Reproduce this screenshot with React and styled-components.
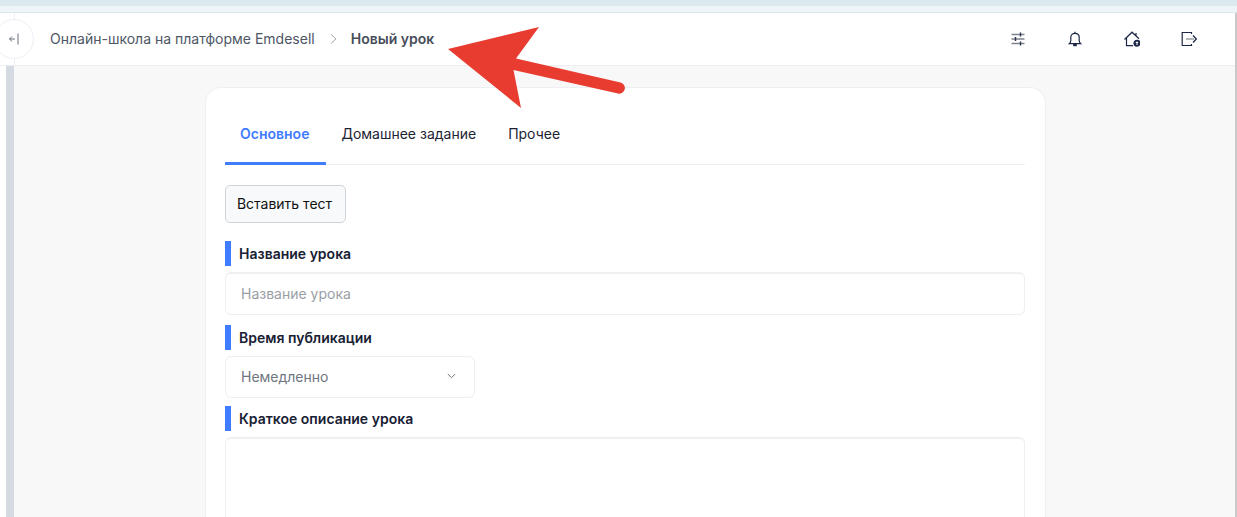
import React from "react";
import styled, { createGlobalStyle } from "styled-components";

const Global = createGlobalStyle`
  html, body { margin: 0; padding: 0; height: 517px; overflow: hidden; background: #fff; }
  * { box-sizing: border-box; }
  body { font-family: Inter, "Noto Sans", sans-serif; font-size: 14px; }
`;

const Page = styled.div`
  position: relative;
  width: 1237px;
  height: 517px;
  overflow: hidden;
  background: #ecf4f7;
  display: flex;
  flex-direction: column;
`;
const TopStrip = styled.div`
  height: 6px;
  background: #dce9ef;
  flex: none;
`;
const Gap = styled.div`
  height: 7px;
  flex: none;
  background: #edf5f8;
  border-bottom: 1px solid #dfe8ec;
`;
const Shell = styled.div`
  flex: 1;
  min-height: 0;
  display: flex;
  flex-direction: column;
  background: #fff;
  border-right: 2px solid #c9c9c9;
`;
const Header = styled.header`
  position: relative;
  flex: none;
  height: 53px;
  display: flex;
  align-items: center;
  padding: 0 38px 0 50px;
  background: #fff;
  border-bottom: 1px solid #eeeef2;
  &::before {
    content: "";
    position: absolute;
    left: 14px;
    top: 0;
    bottom: 0;
    width: 1px;
    background: #eeeef4;
  }
`;
const Collapse = styled.button`
  position: absolute;
  left: -6px;
  top: 6px;
  width: 40px;
  height: 40px;
  padding: 0;
  border-radius: 50%;
  background: #fff;
  border: 1px solid #eeeef6;
  display: flex;
  align-items: center;
  justify-content: center;
`;
const Crumb = styled.span`
  font-size: 14px;
  color: #4e5665;
  white-space: nowrap;
  margin-bottom: 2px;
`;
const CrumbSep = styled.svg`
  width: 7px;
  height: 10px;
  margin: 0 14px 0 15px;
  flex: none;
`;
const CrumbCurrent = styled.span`
  font-size: 14px;
  font-weight: 600;
  color: #474d59;
  white-space: nowrap;
  margin-bottom: 2px;
`;
const Tools = styled.div`
  margin-left: auto;
  display: flex;
  align-items: center;
  gap: 41px;
`;
const Tool = styled.svg`
  width: 16px;
  height: 16px;
  flex: none;
  display: block;
`;
const Body = styled.div`
  flex: 1;
  min-height: 0;
  display: flex;
  overflow: hidden;
  background: #fff;
`;
const Rail = styled.div`
  width: 8px;
  margin-left: 6px;
  flex: none;
  background: #d5d9e2;
`;
const Main = styled.main`
  flex: 1;
  min-width: 0;
  background: #f8f8f8;
  padding: 21px 189px 0 191px;
`;
const Card = styled.section`
  background: #fff;
  border: 1px solid #eeeef4;
  border-bottom: 0;
  border-radius: 16px 16px 0 0;
  padding: 0 20px 0 19px;
  min-height: 600px;
  width: 841px;
`;
const Tabs = styled.div`
  display: flex;
  height: 77px;
  border-bottom: 1px solid #eeeef4;
  margin-bottom: 20px;
`;
const Tab = styled.div`
  height: 77px;
  padding: 16px 17px 0 15px;
  display: flex;
  align-items: center;
  white-space: nowrap;
  font-size: 14px;
  font-weight: ${p => (p.$active ? 600 : 400)};
  color: ${p => (p.$active ? "#3f7cff" : "#1b2333")};
  border-bottom: 3px solid ${p => (p.$active ? "#3f7cff" : "transparent")};
`;
const InsertButton = styled.button`
  display: block;
  width: 121px;
  height: 38px;
  padding: 0 2px 2px 0;
  background: #f8f9fa;
  border: 1px solid #ced4da;
  border-radius: 5px;
  font: 400 14px Inter, sans-serif;
  color: #111;
  margin-bottom: 18px;
`;
const Label = styled.div`
  height: 25px;
  display: flex;
  align-items: center;
  border-left: 6px solid #3f7cff;
  padding-left: 8px;
  font-size: 14px;
  font-weight: 600;
  color: #172033;
  margin-bottom: 6px;
`;
const Field = styled.div`
  width: 800px;
  height: 43px;
  display: flex;
  align-items: center;
  padding: 0 17px 2px 15px;
  background: #fff;
  border: 1px solid #eeeef4;
  border-top: 2px solid #f0f0f2;
  border-radius: 6px;
  font-size: 14px;
  color: #9a9ea6;
  margin-bottom: 10px;
`;
const AreaField = styled(Field)`
  height: 140px;
`;
const SelectField = styled.div`
  width: 250px;
  height: 42px;
  display: flex;
  align-items: center;
  justify-content: space-between;
  padding: 0 17px 2px 15px;
  background: #fff;
  border: 1px solid #eeeef4;
  border-radius: 6px;
  font-size: 14px;
  color: #6f7681;
  margin-bottom: 8px;
`;
const Chevron = styled.svg`
  width: 9px;
  height: 6px;
  margin-right: 1px;
  flex: none;
`;
const Annotation = styled.svg`
  position: absolute;
  left: 0;
  top: 0;
  width: 1237px;
  height: 517px;
  pointer-events: none;
`;

export default function App() {
  return (
    <Page>
      <Global />
      <TopStrip />
      <Gap />
      <Shell>
        <Header>
          <Collapse aria-label="collapse">
            <svg width="12" height="12" viewBox="0 0 12 12" fill="none" stroke="#666c78" strokeWidth="1">
              <path d="M7 6H1.500M4 3.500 1.500 6 4 8.500" />
              <path d="M10 .5v11" />
            </svg>
          </Collapse>
          <Crumb>Онлайн-школа на платформе Emdesell</Crumb>
          <CrumbSep viewBox="0 0 7 10" fill="none" stroke="#a4a7ad" strokeWidth="1">
            <path d="M1 .5 6 5 1 9.500" />
          </CrumbSep>
          <CrumbCurrent>Новый урок</CrumbCurrent>
          <Tools>
            <Tool viewBox="0 0 16 16" fill="none">
              <path d="M1.500 3.500h13M1.500 8h13M1.500 12.500h13" stroke="#7f838b" strokeWidth="1.400" />
              <path d="M10.500 1.500v4M5.500 6v4M10.500 10.500v4" stroke="#27344f" strokeWidth="1.400" />
            </Tool>
            <Tool viewBox="0 0 16 16" fill="none" stroke="#1d2747" strokeWidth="1.200">
              <path d="M2.300 12.600c1-.9 1.500-1.800 1.500-3.200V6.200C3.800 3.900 5.600 2.300 8 2.300s4.200 1.600 4.200 3.900v3.200c0 1.400.5 2.300 1.500 3.200z" />
              <path d="M8 .8v1.400" />
              <path d="M6.800 13.500h2.400v1.100H6.800z" fill="#1d2747" />
            </Tool>
            <Tool viewBox="0 0 16 16" fill="none" stroke="#1d2747" strokeWidth="1.200">
              <path d="M.5 8.500 8 1.200l7 6.600M12 2v3.300" />
              <path d="M2.500 7v7.700h6.500" />
              <circle cx="13" cy="12.200" r="3.500" fill="#1d2747" stroke="none" />
              <path d="M13 10.700v3.400M11.800 11.400h2.400" stroke="#fff" strokeWidth="1" />
            </Tool>
            <Tool viewBox="0 0 16 16" fill="none">
              <path d="M10.500 3V1.500H1.200v13h9.300V13" stroke="#1d2747" strokeWidth="1.200" />
              <path d="M5 8h8" stroke="#b4b6ba" strokeWidth="2" />
              <path d="M12 4.500 15.300 8 12 11.500" stroke="#1d2747" strokeWidth="1.200" />
            </Tool>
          </Tools>
        </Header>
        <Body>
          <Rail />
          <Main>
            <Card>
              <Tabs>
                <Tab $active>Основное</Tab>
                <Tab>Домашнее задание</Tab>
                <Tab>Прочее</Tab>
              </Tabs>
              <InsertButton>Вставить тест</InsertButton>
              <Label>Название урока</Label>
              <Field>Название урока</Field>
              <Label>Время публикации</Label>
              <SelectField>
                Немедленно
                <Chevron viewBox="0 0 9 6" fill="none" stroke="#6f7681" strokeWidth="1">
                  <path d="M.8 1l3.700 3.700L8.200 1" />
                </Chevron>
              </SelectField>
              <Label>Краткое описание урока</Label>
              <AreaField />
            </Card>
          </Main>
        </Body>
      </Shell>
      <Annotation viewBox="0 0 1237 517">
        <path
          d="M448 49 539 27 516 58.500 620.500 82.500A5.600 5.600 0 0 1 618 93.500L513.500 70 521 108Z"
          fill="#e83c30"
        />
      </Annotation>
    </Page>
  );
}
